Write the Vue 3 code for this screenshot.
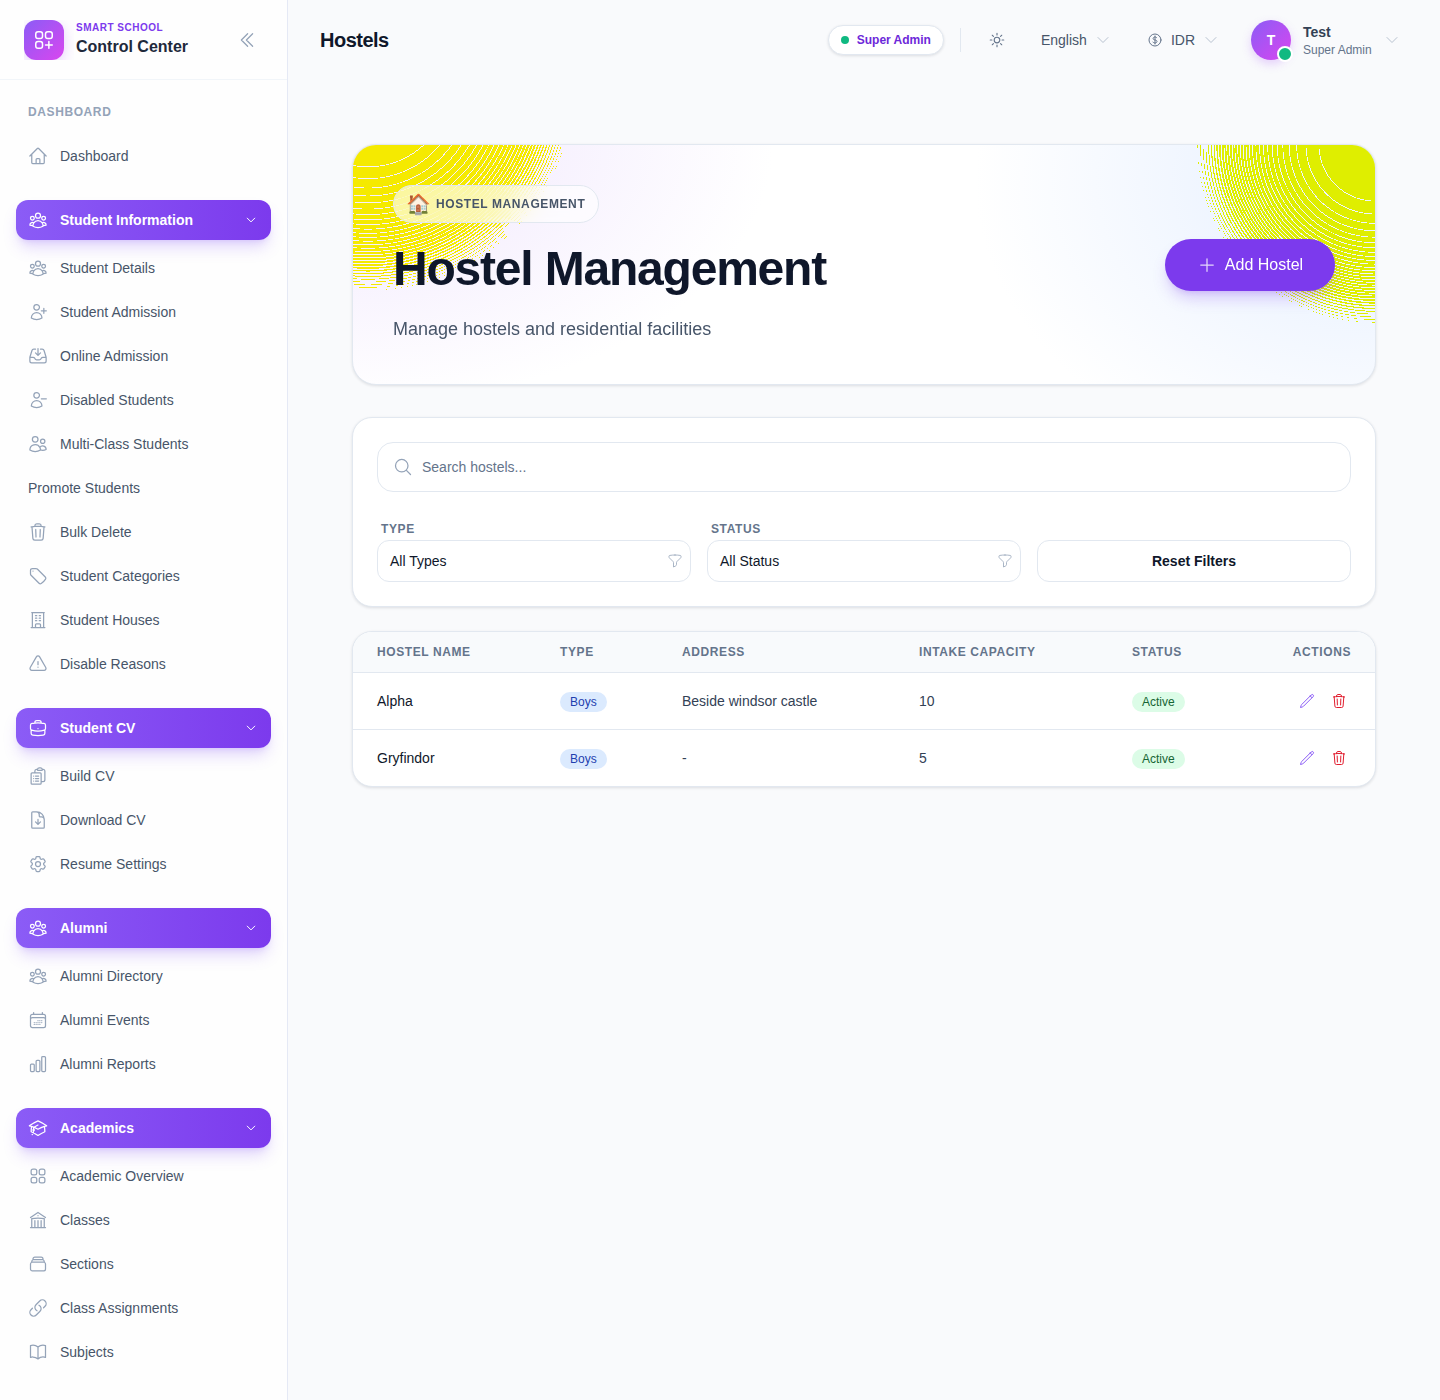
<template>
  <div class="layout">
    <aside class="sidebar">
      <div class="brand">
        <div class="logo-wrap">
          <div class="logo">
            <svg viewBox="0 0 24 24" class="logo-icon"><path :d="icons.squaresPlus" /></svg>
          </div>
        </div>
        <div class="brand-text">
          <div class="brand-sub">SMART SCHOOL</div>
          <div class="brand-name">Control Center</div>
        </div>
        <svg viewBox="0 0 24 24" class="collapse"><path :d="icons.chevronsLeft" /></svg>
      </div>

      <nav class="nav">
        <div class="nav-label">DASHBOARD</div>
        <div class="nav-item">
          <svg viewBox="0 0 24 24" class="icon"><path :d="icons.home" /></svg>
          <span>Dashboard</span>
        </div>

        <section v-for="group in groups" :key="group.title" class="nav-group">
          <div class="group-head">
            <svg viewBox="0 0 24 24" class="icon"><path :d="icons[group.icon]" /></svg>
            <span>{{ group.title }}</span>
            <svg viewBox="0 0 24 24" class="caret"><path :d="icons.chevronDown" /></svg>
          </div>
          <div v-for="item in group.items" :key="item.label" class="nav-item" :class="{ bare: !item.icon }">
            <svg v-if="item.icon" viewBox="0 0 24 24" class="icon"><path :d="icons[item.icon]" /></svg>
            <span>{{ item.label }}</span>
          </div>
        </section>
      </nav>
    </aside>

    <div class="page">
      <header class="topbar">
        <h1 class="page-title">Hostels</h1>
        <div class="top-right">
          <div class="role-pill"><i class="dot"></i>Super Admin</div>
          <div class="divider"></div>
          <svg viewBox="0 0 24 24" class="top-icon sun"><path :d="icons.sun" /></svg>
          <div class="top-select lang">
            <span>English</span>
            <svg viewBox="0 0 24 24" class="top-caret"><path :d="icons.chevronDown" /></svg>
          </div>
          <div class="top-select currency">
            <svg viewBox="0 0 24 24" class="top-icon"><path :d="icons.dollar" /></svg>
            <span>IDR</span>
            <svg viewBox="0 0 24 24" class="top-caret"><path :d="icons.chevronDown" /></svg>
          </div>
          <div class="user">
            <div class="avatar">T<i class="online"></i></div>
            <div class="user-text">
              <div class="user-name">Test</div>
              <div class="user-role">Super Admin</div>
            </div>
            <svg viewBox="0 0 24 24" class="top-caret"><path :d="icons.chevronDown" /></svg>
          </div>
        </div>
      </header>

      <main class="content">
        <section class="hero">
          <canvas ref="heroDots" class="hero-dots" width="1022" height="239"></canvas>
          <div class="hero-copy">
            <div class="hero-pill"><span class="emoji">🏠</span>HOSTEL MANAGEMENT</div>
            <h2 class="hero-title">Hostel Management</h2>
            <p class="hero-sub">Manage hostels and residential facilities</p>
          </div>
          <button class="add-btn">
            <svg viewBox="0 0 24 24"><path :d="icons.plus" /></svg>
            Add Hostel
          </button>
        </section>

        <section class="filters">
          <div class="search">
            <svg viewBox="0 0 24 24"><path :d="icons.search" /></svg>
            <span>Search hostels...</span>
          </div>
          <div class="filter-row">
            <div class="field">
              <label>TYPE</label>
              <div class="select">
                <span>All Types</span>
                <svg viewBox="0 0 24 24"><path :d="icons.funnel" /></svg>
              </div>
            </div>
            <div class="field">
              <label>STATUS</label>
              <div class="select">
                <span>All Status</span>
                <svg viewBox="0 0 24 24"><path :d="icons.funnel" /></svg>
              </div>
            </div>
            <button class="reset">Reset Filters</button>
          </div>
        </section>

        <section class="table-card">
          <table>
            <colgroup>
              <col style="width: 183px" />
              <col style="width: 122px" />
              <col style="width: 237px" />
              <col style="width: 213px" />
              <col />
              <col style="width: 130px" />
            </colgroup>
            <thead>
              <tr>
                <th>Hostel Name</th>
                <th>Type</th>
                <th>Address</th>
                <th>Intake Capacity</th>
                <th>Status</th>
                <th class="right">Actions</th>
              </tr>
            </thead>
            <tbody>
              <tr v-for="row in hostels" :key="row.name">
                <td class="name">{{ row.name }}</td>
                <td><span class="badge blue">{{ row.type }}</span></td>
                <td>{{ row.address }}</td>
                <td>{{ row.capacity }}</td>
                <td><span class="badge green">{{ row.status }}</span></td>
                <td class="right">
                  <div class="actions">
                    <svg viewBox="0 0 24 24" class="edit"><path :d="icons.pencil" /></svg>
                    <svg viewBox="0 0 24 24" class="del"><path :d="icons.trash" /></svg>
                  </div>
                </td>
              </tr>
            </tbody>
          </table>
        </section>
      </main>
    </div>
  </div>
</template>

<script setup>
import { onMounted, ref } from 'vue'

const icons = {
  squaresPlus: 'M13.5 16.875h3.375m0 0h3.375m-3.375 0V13.5m0 3.375v3.375M6 10.5h2.25a2.25 2.25 0 002.25-2.25V6a2.25 2.25 0 00-2.25-2.25H6A2.25 2.25 0 003.75 6v2.25A2.25 2.25 0 006 10.5zm0 9.75h2.25A2.25 2.25 0 0010.5 18v-2.25a2.25 2.25 0 00-2.25-2.25H6a2.25 2.25 0 00-2.25 2.25V18A2.25 2.25 0 006 20.25zm9.75-9.75H18a2.25 2.25 0 002.25-2.25V6A2.25 2.25 0 0018 3.75h-2.25A2.25 2.25 0 0013.5 6v2.25a2.25 2.25 0 002.25 2.25z',
  chevronsLeft: 'M18.75 19.5l-7.5-7.5 7.5-7.5m-6 15L5.25 12l7.5-7.5',
  chevronDown: 'M19.5 8.25l-7.5 7.5-7.5-7.5',
  home: 'M2.25 12l8.954-8.955c.44-.439 1.152-.439 1.591 0L21.75 12M4.5 9.75v10.125c0 .621.504 1.125 1.125 1.125H9.75v-4.875c0-.621.504-1.125 1.125-1.125h2.25c.621 0 1.125.504 1.125 1.125V21h4.125c.621 0 1.125-.504 1.125-1.125V9.75M8.25 21h8.25',
  userGroup: 'M18 18.72a9.094 9.094 0 003.741-.479 3 3 0 00-4.682-2.72m.94 3.198l.001.031c0 .225-.012.447-.037.666A11.944 11.944 0 0112 21c-2.17 0-4.207-.576-5.963-1.584A6.062 6.062 0 016 18.719m12 0a5.971 5.971 0 00-.941-3.197m0 0A5.995 5.995 0 0012 12.75a5.995 5.995 0 00-5.058 2.772m0 0a3 3 0 00-4.681 2.72 8.986 8.986 0 003.74.477m.94-3.197a5.971 5.971 0 00-.94 3.197M15 6.75a3 3 0 11-6 0 3 3 0 016 0zm6 3a2.25 2.25 0 11-4.5 0 2.25 2.25 0 014.5 0zm-13.5 0a2.25 2.25 0 11-4.5 0 2.25 2.25 0 014.5 0z',
  userPlus: 'M19 7.5v3m0 0v3m0-3h3m-3 0h-3m-2.25-4.125a3.375 3.375 0 11-6.75 0 3.375 3.375 0 016.75 0zM4 19.235v-.11a6.375 6.375 0 0112.75 0v.109A12.318 12.318 0 0110.374 21c-2.331 0-4.512-.645-6.374-1.766z',
  userMinus: 'M22 10.5h-6m-2.25-4.125a3.375 3.375 0 11-6.75 0 3.375 3.375 0 016.75 0zM4 19.235v-.11a6.375 6.375 0 0112.75 0v.109A12.318 12.318 0 0110.374 21c-2.331 0-4.512-.645-6.374-1.766z',
  inbox: 'M9 3.75H6.912a2.25 2.25 0 00-2.15 1.588L2.35 13.177a2.25 2.25 0 00-.1.661V18a2.25 2.25 0 002.25 2.25h15A2.25 2.25 0 0021.75 18v-4.162c0-.224-.034-.447-.1-.661L19.24 5.338a2.25 2.25 0 00-2.15-1.588H15M2.25 13.5h3.86a2.25 2.25 0 012.012 1.244l.256.512a2.25 2.25 0 002.013 1.244h3.218a2.25 2.25 0 002.013-1.244l.256-.512a2.25 2.25 0 012.013-1.244h3.859M12 3v8.25m0 0l-3-3m3 3l3-3',
  users: 'M15 19.128a9.38 9.38 0 002.625.372 9.337 9.337 0 004.121-.952 4.125 4.125 0 00-7.533-2.493M15 19.128v-.003c0-1.113-.285-2.16-.786-3.07M15 19.128v.106A12.318 12.318 0 018.624 21c-2.331 0-4.512-.645-6.374-1.766l-.001-.109a6.375 6.375 0 0111.964-3.07M12 6.375a3.375 3.375 0 11-6.75 0 3.375 3.375 0 016.75 0zm8.25 2.25a2.625 2.625 0 11-5.25 0 2.625 2.625 0 015.25 0z',
  trash: 'M14.74 9l-.346 9m-4.788 0L9.26 9m9.968-3.21c.342.052.682.107 1.022.166m-1.022-.165L18.16 19.673a2.25 2.25 0 01-2.244 2.077H8.084a2.25 2.25 0 01-2.244-2.077L4.772 5.79m14.456 0a48.108 48.108 0 00-3.478-.397m-12 .562c.34-.059.68-.114 1.022-.165m0 0a48.11 48.11 0 013.478-.397m7.5 0v-.916c0-1.18-.91-2.164-2.09-2.201a51.964 51.964 0 00-3.32 0c-1.18.037-2.09 1.022-2.09 2.201v.916m7.5 0a48.667 48.667 0 00-7.5 0',
  tag: 'M9.568 3H5.25A2.25 2.25 0 003 5.25v4.318c0 .597.237 1.17.659 1.591l9.581 9.581c.699.699 1.78.872 2.607.33a18.095 18.095 0 005.223-5.223c.542-.827.369-1.908-.33-2.607L11.16 3.66A2.25 2.25 0 009.568 3zM6 6h.008v.008H6V6z',
  building: 'M3.75 21h16.5M4.5 3h15M5.25 3v18m13.5-18v18M9 6.75h1.5m-1.5 3h1.5m-1.5 3h1.5m3-6H15m-1.5 3H15m-1.5 3H15M9 21v-3.375c0-.621.504-1.125 1.125-1.125h3.75c.621 0 1.125.504 1.125 1.125V21',
  warning: 'M12 9v3.75m-9.303 3.376c-.866 1.5.217 3.374 1.948 3.374h14.71c1.73 0 2.813-1.874 1.948-3.374L13.949 3.378c-.866-1.5-3.032-1.5-3.898 0L2.697 16.126zM12 15.75h.007v.008H12v-.008z',
  briefcase: 'M20.25 14.15v4.25c0 1.094-.787 2.036-1.872 2.18-2.087.277-4.216.42-6.378.42s-4.291-.143-6.378-.42c-1.085-.144-1.872-1.086-1.872-2.18v-4.25m16.5 0a2.18 2.18 0 00.75-1.661V8.706c0-1.081-.768-2.015-1.837-2.175a48.114 48.114 0 00-3.413-.387m4.5 8.006c-.194.165-.42.295-.673.38A23.978 23.978 0 0112 15.75c-2.648 0-5.195-.429-7.577-1.22a2.016 2.016 0 01-.673-.38m0 0A2.18 2.18 0 013 12.489V8.706c0-1.081.768-2.015 1.837-2.175a48.111 48.111 0 013.413-.387m7.5 0V5.25A2.25 2.25 0 0013.5 3h-3a2.25 2.25 0 00-2.25 2.25v.894m7.5 0a48.667 48.667 0 00-7.5 0M12 12.75h.008v.008H12v-.008z',
  clipboard: 'M9 12h3.75M9 15h3.75M9 18h3.75m3 .75H18a2.25 2.25 0 002.25-2.25V6.108c0-1.135-.845-2.098-1.976-2.192a48.424 48.424 0 00-1.123-.08m-5.801 0c-.065.21-.1.433-.1.664 0 .414.336.75.75.75h4.5a.75.75 0 00.75-.75 2.25 2.25 0 00-.1-.664m-5.8 0A2.251 2.251 0 0113.5 2.25H15c1.012 0 1.867.668 2.15 1.586m-5.8 0c-.376.023-.75.05-1.124.08C9.095 4.01 8.25 4.973 8.25 6.108V8.25m0 0H4.875c-.621 0-1.125.504-1.125 1.125v11.25c0 .621.504 1.125 1.125 1.125h9.75c.621 0 1.125-.504 1.125-1.125V9.375c0-.621-.504-1.125-1.125-1.125H8.25zM6.75 12h.008v.008H6.75V12zm0 3h.008v.008H6.75V15zm0 3h.008v.008H6.75V18z',
  docDown: 'M19.5 14.25v-2.625a3.375 3.375 0 00-3.375-3.375h-1.5A1.125 1.125 0 0113.5 7.125v-1.5a3.375 3.375 0 00-3.375-3.375H8.25m.75 12l3 3m0 0l3-3m-3 3v-6m-1.5-9H5.625c-.621 0-1.125.504-1.125 1.125v17.25c0 .621.504 1.125 1.125 1.125h12.75c.621 0 1.125-.504 1.125-1.125V11.25a9 9 0 00-9-9z',
  cog: 'M9.594 3.94c.09-.542.56-.94 1.11-.94h2.593c.55 0 1.02.398 1.11.94l.213 1.281c.063.374.313.686.645.87.074.04.147.083.22.127.324.196.72.257 1.075.124l1.217-.456a1.125 1.125 0 011.37.49l1.296 2.247a1.125 1.125 0 01-.26 1.431l-1.003.827c-.293.24-.438.613-.431.992a6.759 6.759 0 010 .255c-.007.378.138.75.43.99l1.005.828c.424.35.534.954.26 1.43l-1.298 2.247a1.125 1.125 0 01-1.369.491l-1.217-.456c-.355-.133-.75-.072-1.076.124a6.57 6.57 0 01-.22.128c-.331.183-.581.495-.644.869l-.213 1.28c-.09.543-.56.941-1.11.941h-2.594c-.55 0-1.02-.398-1.11-.94l-.213-1.281c-.062-.374-.312-.686-.644-.87a6.52 6.52 0 01-.22-.127c-.325-.196-.72-.257-1.076-.124l-1.217.456a1.125 1.125 0 01-1.369-.49l-1.297-2.247a1.125 1.125 0 01.26-1.431l1.004-.827c.292-.24.437-.613.43-.992a6.932 6.932 0 010-.255c.007-.378-.138-.75-.43-.99l-1.004-.828a1.125 1.125 0 01-.26-1.43l1.297-2.247a1.125 1.125 0 011.37-.491l1.216.456c.356.133.751.072 1.076-.124.072-.044.146-.087.22-.128.332-.183.582-.495.644-.869l.214-1.281zM15 12a3 3 0 11-6 0 3 3 0 016 0z',
  calendar: 'M6.75 3v2.25M17.25 3v2.25M3 18.75V7.5a2.25 2.25 0 012.25-2.25h13.5A2.25 2.25 0 0121 7.5v11.25m-18 0A2.25 2.25 0 005.25 21h13.5A2.25 2.25 0 0021 18.75m-18 0v-7.5A2.25 2.25 0 015.25 9h13.5A2.25 2.25 0 0121 11.25v7.5m-9-6h.008v.008H12v-.008zM12 15h.008v.008H12V15zm0 2.25h.008v.008H12v-.008zM9.75 15h.008v.008H9.75V15zm0 2.25h.008v.008H9.75v-.008zM7.5 15h.008v.008H7.5V15zm0 2.25h.008v.008H7.5v-.008zm6.75-4.5h.008v.008h-.008v-.008zm0 2.25h.008v.008h-.008V15zm0 2.25h.008v.008h-.008v-.008zm2.25-4.5h.008v.008H16.5v-.008zm0 2.25h.008v.008H16.5V15z',
  chart: 'M3 13.125C3 12.504 3.504 12 4.125 12h2.25c.621 0 1.125.504 1.125 1.125v6.75C7.5 20.496 6.996 21 6.375 21h-2.25A1.125 1.125 0 013 19.875v-6.75zM9.75 8.625c0-.621.504-1.125 1.125-1.125h2.25c.621 0 1.125.504 1.125 1.125v11.25c0 .621-.504 1.125-1.125 1.125h-2.25a1.125 1.125 0 01-1.125-1.125V8.625zM16.5 4.125c0-.621.504-1.125 1.125-1.125h2.25C20.496 3 21 3.504 21 4.125v15.75c0 .621-.504 1.125-1.125 1.125h-2.25a1.125 1.125 0 01-1.125-1.125V4.125z',
  cap: 'M4.26 10.147a60.436 60.436 0 00-.491 6.347A48.627 48.627 0 0112 20.904a48.627 48.627 0 018.232-4.41 60.46 60.46 0 00-.491-6.347m-15.482 0a50.57 50.57 0 00-2.658-.813A59.905 59.905 0 0112 3.493a59.902 59.902 0 0110.399 5.84c-.896.248-1.783.52-2.658.814m-15.482 0A50.697 50.697 0 0112 13.489a50.702 50.702 0 017.74-3.342M6.75 15a.75.75 0 100-1.5.75.75 0 000 1.5zm0 0v-3.675A55.378 55.378 0 0112 8.443m-7.007 11.55A5.981 5.981 0 006.75 15.75v-1.5',
  squares: 'M3.75 6A2.25 2.25 0 016 3.75h2.25A2.25 2.25 0 0110.5 6v2.25a2.25 2.25 0 01-2.25 2.25H6a2.25 2.25 0 01-2.25-2.25V6zM3.75 15.75A2.25 2.25 0 016 13.5h2.25a2.25 2.25 0 012.25 2.25V18a2.25 2.25 0 01-2.25 2.25H6A2.25 2.25 0 013.75 18v-2.25zM13.5 6a2.25 2.25 0 012.25-2.25H18A2.25 2.25 0 0120.25 6v2.25A2.25 2.25 0 0118 10.5h-2.25a2.25 2.25 0 01-2.25-2.25V6zM13.5 15.75a2.25 2.25 0 012.25-2.25H18a2.25 2.25 0 012.25 2.25V18A2.25 2.25 0 0118 20.25h-2.25A2.25 2.25 0 0113.5 18v-2.25z',
  library: 'M12 21v-8.25M15.75 21v-8.25M8.25 21v-8.25M3 9l9-6 9 6m-1.5 12V10.332A48.36 48.36 0 0012 9.75c-2.551 0-5.056.2-7.5.582V21M3 21h18M12 6.75h.008v.008H12V6.75z',
  stack: 'M6 6.878V6a2.25 2.25 0 012.25-2.25h7.5A2.25 2.25 0 0118 6v.878m-12 0c.235-.083.487-.128.75-.128h10.5c.263 0 .515.045.75.128m-12 0A2.25 2.25 0 004.5 9v.878m13.5-3A2.25 2.25 0 0119.5 9v.878m0 0a2.246 2.246 0 00-.75-.128H5.25c-.263 0-.515.045-.75.128m15 0A2.25 2.25 0 0121 12v6a2.25 2.25 0 01-2.25 2.25H5.25A2.25 2.25 0 013 18v-6c0-.98.626-1.813 1.5-2.122',
  link: 'M13.19 8.688a4.5 4.5 0 011.242 7.244l-4.5 4.5a4.5 4.5 0 01-6.364-6.364l1.757-1.757m13.35-.622l1.757-1.757a4.5 4.5 0 00-6.364-6.364l-4.5 4.5a4.5 4.5 0 001.242 7.244',
  book: 'M12 6.042A8.967 8.967 0 006 3.75c-1.052 0-2.062.18-3 .512v14.25A8.987 8.987 0 016 18c2.305 0 4.408.867 6 2.292m0-14.25a8.966 8.966 0 016-2.292c1.052 0 2.062.18 3 .512v14.25A8.987 8.987 0 0018 18a8.967 8.967 0 00-6 2.292m0-14.25v14.25',
  sun: 'M12 3v2.25m6.364.386l-1.591 1.591M21 12h-2.25m-.386 6.364l-1.591-1.591M12 18.75V21m-4.773-4.227l-1.591 1.591M5.25 12H3m4.227-4.773L5.636 5.636M15.75 12a3.75 3.75 0 11-7.5 0 3.75 3.75 0 017.5 0z',
  dollar: 'M12 6v12m-3-2.818l.879.659c1.171.879 3.07.879 4.242 0 1.172-.879 1.172-2.303 0-3.182C13.536 12.219 12.768 12 12 12c-.725 0-1.45-.22-2.003-.659-1.106-.879-1.106-2.303 0-3.182s2.9-.879 4.006 0l.415.33M21 12a9 9 0 11-18 0 9 9 0 0118 0z',
  plus: 'M12 4.5v15m7.5-7.5h-15',
  search: 'M21 21l-5.197-5.197m0 0A7.5 7.5 0 105.196 5.196a7.5 7.5 0 0010.607 10.607z',
  funnel: 'M12 3c2.755 0 5.455.232 8.083.678.533.09.917.556.917 1.096v1.044a2.25 2.25 0 01-.659 1.591l-5.432 5.432a2.25 2.25 0 00-.659 1.591v2.927a2.25 2.25 0 01-1.244 2.013L9.75 21v-6.568a2.25 2.25 0 00-.659-1.591L3.659 7.409A2.25 2.25 0 013 5.818V4.774c0-.54.384-1.006.917-1.096A48.32 48.32 0 0112 3z',
  pencil: 'M16.862 4.487l1.687-1.688a1.875 1.875 0 112.652 2.652L6.832 19.82a4.5 4.5 0 01-1.897 1.13l-2.685.8.8-2.685a4.5 4.5 0 011.13-1.897L16.863 4.487zm0 0L19.5 7.125',
}

const groups = [
  {
    title: 'Student Information',
    icon: 'userGroup',
    items: [
      { label: 'Student Details', icon: 'userGroup' },
      { label: 'Student Admission', icon: 'userPlus' },
      { label: 'Online Admission', icon: 'inbox' },
      { label: 'Disabled Students', icon: 'userMinus' },
      { label: 'Multi-Class Students', icon: 'users' },
      { label: 'Promote Students' },
      { label: 'Bulk Delete', icon: 'trash' },
      { label: 'Student Categories', icon: 'tag' },
      { label: 'Student Houses', icon: 'building' },
      { label: 'Disable Reasons', icon: 'warning' },
    ],
  },
  {
    title: 'Student CV',
    icon: 'briefcase',
    items: [
      { label: 'Build CV', icon: 'clipboard' },
      { label: 'Download CV', icon: 'docDown' },
      { label: 'Resume Settings', icon: 'cog' },
    ],
  },
  {
    title: 'Alumni',
    icon: 'userGroup',
    items: [
      { label: 'Alumni Directory', icon: 'userGroup' },
      { label: 'Alumni Events', icon: 'calendar' },
      { label: 'Alumni Reports', icon: 'chart' },
    ],
  },
  {
    title: 'Academics',
    icon: 'cap',
    items: [
      { label: 'Academic Overview', icon: 'squares' },
      { label: 'Classes', icon: 'library' },
      { label: 'Sections', icon: 'stack' },
      { label: 'Class Assignments', icon: 'link' },
      { label: 'Subjects', icon: 'book' },
    ],
  },
]

const hostels = [
  { name: 'Alpha', type: 'Boys', address: 'Beside windsor castle', capacity: 10, status: 'Active' },
  { name: 'Gryfindor', type: 'Boys', address: '-', capacity: 5, status: 'Active' },
]

const heroDots = ref(null)

// yellow corners of the banner: thin rings that get denser and break up towards the rim
function paintCorner(img, w, h, o) {
  const minSpacing = 2.7
  const dLimit = Math.sqrt(o.chirp / (3 * minSpacing))
  const fadeFrom = o.reach * 0.72
  for (let y = 0; y < h; y++) {
    for (let x = 0; x < w; x++) {
      const d = Math.hypot(x + 0.5 - o.cx, y + 0.5 - o.cy)
      if (d >= o.reach) continue
      const phase = d <= dLimit
        ? (d * d * d) / o.chirp + o.shift
        : (dLimit * dLimit * dLimit) / o.chirp + o.shift + (d - dLimit) / minSpacing
      const spacing = Math.max(minSpacing, o.chirp / (3 * d * d))
      const fade = Math.max(0, (d - fadeFrom) / (o.reach - fadeFrom))
      const gap = Math.max(0.8 / spacing, Math.pow(fade, 1.3))
      if (d > o.firstRing && phase % 1 < gap) continue
      const i = (y * w + x) * 4
      img.data[i] = o.rgb[0]
      img.data[i + 1] = o.rgb[1]
      img.data[i + 2] = o.rgb[2]
      img.data[i + 3] = 255
    }
  }
}

onMounted(() => {
  const canvas = heroDots.value
  const ctx = canvas.getContext('2d')
  const img = ctx.createImageData(canvas.width, canvas.height)
  paintCorner(img, canvas.width, canvas.height, { cx: 15, cy: -60, chirp: 270000, shift: 0, reach: 208, firstRing: 78, rgb: [245, 234, 0] })
  paintCorner(img, canvas.width, canvas.height, { cx: canvas.width, cy: 0, chirp: 150000, shift: 0.85, reach: 180, firstRing: 30, rgb: [223, 238, 0] })
  ctx.putImageData(img, 0, 0)
})
</script>

<style scoped>
.layout {
  display: flex;
  min-height: 1400px;
  height: 1400px;
  overflow: hidden;
  background: #f9fafc;
  font-family: "Liberation Sans", Arial, sans-serif;
  color: #0f172a;
}

/* Sidebar */
.sidebar {
  width: 288px;
  flex-shrink: 0;
  box-sizing: border-box;
  background: #fefefe;
  border-right: 1px solid #e5e9f5;
}
.brand {
  height: 80px;
  box-sizing: border-box;
  display: flex;
  align-items: center;
  padding: 0 24px;
  border-bottom: 1px solid #f1f5f9;
}
.logo-wrap { width: 50px; height: 40px; overflow: hidden; flex-shrink: 0; }
.logo {
  width: 40px;
  height: 40px;
  border-radius: 12px;
  display: flex;
  align-items: center;
  justify-content: center;
  background: linear-gradient(135deg, #8b5cf6, #d946ef);
  box-shadow: 0 4px 14px rgba(168, 85, 247, 0.28);
}
.logo-icon { width: 24px; height: 24px; fill: none; stroke: #fff; stroke-width: 1.5; stroke-linecap: round; stroke-linejoin: round; }
.brand-text { margin-left: 2px; flex: 1; }
.brand-sub { font-size: 10px; line-height: 14px; font-weight: 700; letter-spacing: 0.5px; color: #7c3aed; margin-top: -1px; }
.brand-name { font-size: 16px; line-height: 22px; margin-top: 1px; font-weight: 700; color: #1e293b; }
.collapse { width: 20px; height: 20px; margin-right: 6px; fill: none; stroke: #94a3b8; stroke-width: 1.5; stroke-linecap: round; stroke-linejoin: round; }

.nav { padding: 24px 16px 0 16px; }
.nav-label { font-size: 12px; line-height: 16px; font-weight: 700; letter-spacing: 0.6px; color: #94a3b8; padding-left: 12px; margin-bottom: 14px; }
.nav-item {
  height: 44px;
  display: flex;
  align-items: center;
  gap: 12px;
  padding-left: 12px;
  font-size: 14px;
  color: #475569;
}
.icon { width: 20px; height: 20px; flex-shrink: 0; fill: none; stroke: #94a3b8; stroke-width: 1.5; stroke-linecap: round; stroke-linejoin: round; }
.nav-group { margin-top: 22px; }
.group-head {
  height: 40px;
  width: 255px;
  display: flex;
  align-items: center;
  gap: 12px;
  padding: 0 12px;
  box-sizing: border-box;
  border-radius: 12px;
  margin-bottom: 6px;
  font-size: 14px;
  font-weight: 700;
  color: #fff;
  background: linear-gradient(90deg, #8b5cf6, #7c3aed);
  box-shadow: 0 10px 15px -3px rgba(139, 92, 246, 0.25), 0 4px 6px -4px rgba(139, 92, 246, 0.25);
}
.group-head .icon { stroke: #fff; }
.group-head span { flex: 1; }
.caret { width: 12px; height: 12px; margin-right: 2px; fill: none; stroke: #fff; stroke-width: 2; stroke-linecap: round; stroke-linejoin: round; }

/* Top bar */
.page { flex: 1; min-width: 0; }
.topbar {
  height: 80px;
  display: flex;
  align-items: center;
  justify-content: space-between;
  padding: 0 40px 0 32px;
}
.page-title { margin: 0; font-size: 20px; font-weight: 700; letter-spacing: -0.5px; color: #0f172a; }
.top-right { display: flex; align-items: center; }
.role-pill {
  height: 30px;
  box-sizing: border-box;
  display: flex;
  align-items: center;
  gap: 8px;
  padding: 0 12px;
  border: 1px solid #e2e8f0;
  border-radius: 15px;
  background: #fff;
  box-shadow: 0 1px 3px rgba(15, 23, 42, 0.12);
  font-size: 12px;
  font-weight: 700;
  color: #6d28d9;
}
.dot { width: 8px; height: 8px; border-radius: 50%; background: #10b981; }
.divider { width: 1px; height: 24px; background: #e2e8f0; margin: 0 16px; }
.top-icon { width: 16px; height: 16px; fill: none; stroke: #64748b; stroke-width: 1.5; stroke-linecap: round; stroke-linejoin: round; }
.sun { width: 18px; height: 18px; margin: 0 35px 0 11px; flex-shrink: 0; }
.top-select { display: flex; align-items: center; font-size: 14px; color: #475569; }
.top-caret { width: 16px; height: 16px; fill: none; stroke: #b8c2d0; stroke-width: 1.5; stroke-linecap: round; stroke-linejoin: round; }
.lang { gap: 8px; margin-right: 36px; }
.currency { gap: 8px; margin-right: 32px; }
.user { display: flex; align-items: center; }
.avatar {
  position: relative;
  width: 40px;
  height: 40px;
  border-radius: 50%;
  display: flex;
  align-items: center;
  justify-content: center;
  background: linear-gradient(135deg, #8b5cf6, #d946ef);
  box-shadow: 0 4px 10px rgba(168, 85, 247, 0.25);
  font-size: 14px;
  font-weight: 700;
  color: #fff;
}
.online {
  position: absolute;
  right: -2px;
  bottom: -2px;
  width: 12px;
  height: 12px;
  border: 2px solid #fff;
  border-radius: 50%;
  background: #10b981;
}
.user-text { margin-left: 12px; margin-right: 12px; width: 69px; }
.user-name { font-size: 14px; line-height: 18px; font-weight: 700; color: #334155; }
.user-role { font-size: 12px; line-height: 16px; margin-top: 1px; color: #64748b; }

/* Content */
.content { padding: 64px 64px 0 64px; }
.hero {
  position: relative;
  height: 241px;
  box-sizing: border-box;
  display: flex;
  align-items: center;
  justify-content: space-between;
  padding: 0 40px;
  border: 1px solid #e2e8f0;
  border-radius: 24px;
  overflow: hidden;
  background:
    radial-gradient(ellipse 420px 260px at 0 0, #f6f0fe 40%, rgba(246, 240, 254, 0) 100%),
    radial-gradient(ellipse 400px 300px at 100% 15%, #eff5ff 40%, rgba(239, 245, 255, 0) 100%),
    #fff;
  box-shadow: 0 1px 3px rgba(15, 23, 42, 0.12);
}
.hero-dots { position: absolute; left: 0; top: 0; }
.hero-copy { position: relative; align-self: flex-start; padding-top: 40px; }
.hero-pill {
  display: inline-flex;
  align-items: center;
  height: 38px;
  box-sizing: border-box;
  padding: 0 13px 0 12px;
  gap: 5px;
  border: 1px solid #e2e8f0;
  border-radius: 19px;
  background: rgba(255, 255, 255, 0.6);
  backdrop-filter: blur(12px);
  font-size: 12px;
  font-weight: 700;
  letter-spacing: 0.6px;
  color: #475569;
}
.emoji { font-size: 20px; line-height: 1; letter-spacing: 0; }
.hero-title { margin: 17px 0 0; font-size: 48px; line-height: 58px; font-weight: 700; letter-spacing: -1.2px; color: #0f172a; }
.hero-sub { margin: 18px 0 0; font-size: 18px; line-height: 26px; color: #475569; }
.add-btn {
  position: relative;
  width: 170px;
  height: 52px;
  display: flex;
  align-items: center;
  justify-content: center;
  gap: 8px;
  border: 0;
  border-radius: 26px;
  background: #7c3aed;
  box-shadow: 0 10px 15px -3px rgba(124, 58, 237, 0.25), 0 4px 6px -4px rgba(124, 58, 237, 0.25);
  font-family: inherit;
  font-size: 16px;
  color: #fff;
}
.add-btn svg { width: 20px; height: 20px; fill: none; stroke: #e4d8fb; stroke-width: 1.5; stroke-linecap: round; }

.filters {
  margin-top: 32px;
  height: 190px;
  box-sizing: border-box;
  padding: 24px;
  background: #fff;
  border: 1px solid #e2e8f0;
  border-radius: 20px;
  box-shadow: 0 1px 3px rgba(15, 23, 42, 0.12);
}
.search {
  height: 50px;
  box-sizing: border-box;
  display: flex;
  align-items: center;
  gap: 9px;
  padding-left: 15px;
  border: 1px solid #e2e8f0;
  border-radius: 16px;
  font-size: 14px;
  color: #64748b;
}
.search svg { width: 20px; height: 20px; fill: none; stroke: #94a3b8; stroke-width: 1.5; stroke-linecap: round; stroke-linejoin: round; }
.filter-row { display: grid; grid-template-columns: repeat(3, 1fr); gap: 16px; align-items: end; margin-top: 30px; }
.field label { display: block; padding-left: 4px; font-size: 12px; line-height: 14px; font-weight: 700; letter-spacing: 0.6px; color: #64748b; margin-bottom: 4px; }
.select {
  height: 42px;
  box-sizing: border-box;
  display: flex;
  align-items: center;
  justify-content: space-between;
  padding: 0 7px 0 12px;
  border: 1px solid #e2e8f0;
  border-radius: 12px;
  font-size: 14px;
  color: #0f172a;
}
.select svg { width: 16px; height: 16px; fill: none; stroke: #94a3b8; stroke-width: 1.2; stroke-linecap: round; stroke-linejoin: round; }
.reset {
  height: 42px;
  border: 1px solid #e2e8f0;
  border-radius: 12px;
  background: #fff;
  font-family: inherit;
  font-size: 14px;
  font-weight: 700;
  color: #0f172a;
}

.table-card {
  margin-top: 24px;
  background: #fff;
  border: 1px solid #e2e8f0;
  border-radius: 20px;
  overflow: hidden;
  box-shadow: 0 1px 3px rgba(15, 23, 42, 0.12);
}
table { width: 100%; border-collapse: collapse; table-layout: fixed; }
th {
  height: 40px;
  padding: 0 0 0 24px;
  background: #f8fafc;
  border-bottom: 1px solid #e2e8f0;
  text-align: left;
  font-size: 12px;
  font-weight: 700;
  letter-spacing: 0.6px;
  text-transform: uppercase;
  color: #64748b;
}
td {
  height: 56px;
  padding: 0 0 0 24px;
  font-size: 14px;
  color: #334155;
}
tbody tr + tr td { border-top: 1px solid #e2e8f0; }
td.name { color: #0f172a; }
th.right { padding-right: 24px; text-align: right; }
td.right { padding-right: 24px; }
.badge {
  display: inline-block;
  height: 20px;
  line-height: 20px;
  margin-top: 2px;
  padding: 0 10px;
  border-radius: 10px;
  font-size: 12px;
  vertical-align: middle;
}
.badge.blue { background: #dbeafe; color: #1e40af; }
.badge.green { background: #dcfce7; color: #166534; }
.actions { display: flex; justify-content: flex-end; gap: 16px; padding-right: 4px; }
.actions svg { width: 16px; height: 16px; fill: none; stroke-width: 1.5; stroke-linecap: round; stroke-linejoin: round; }
.edit { stroke: #8b5cf6; }
.del { stroke: #e11d2e; }
</style>
